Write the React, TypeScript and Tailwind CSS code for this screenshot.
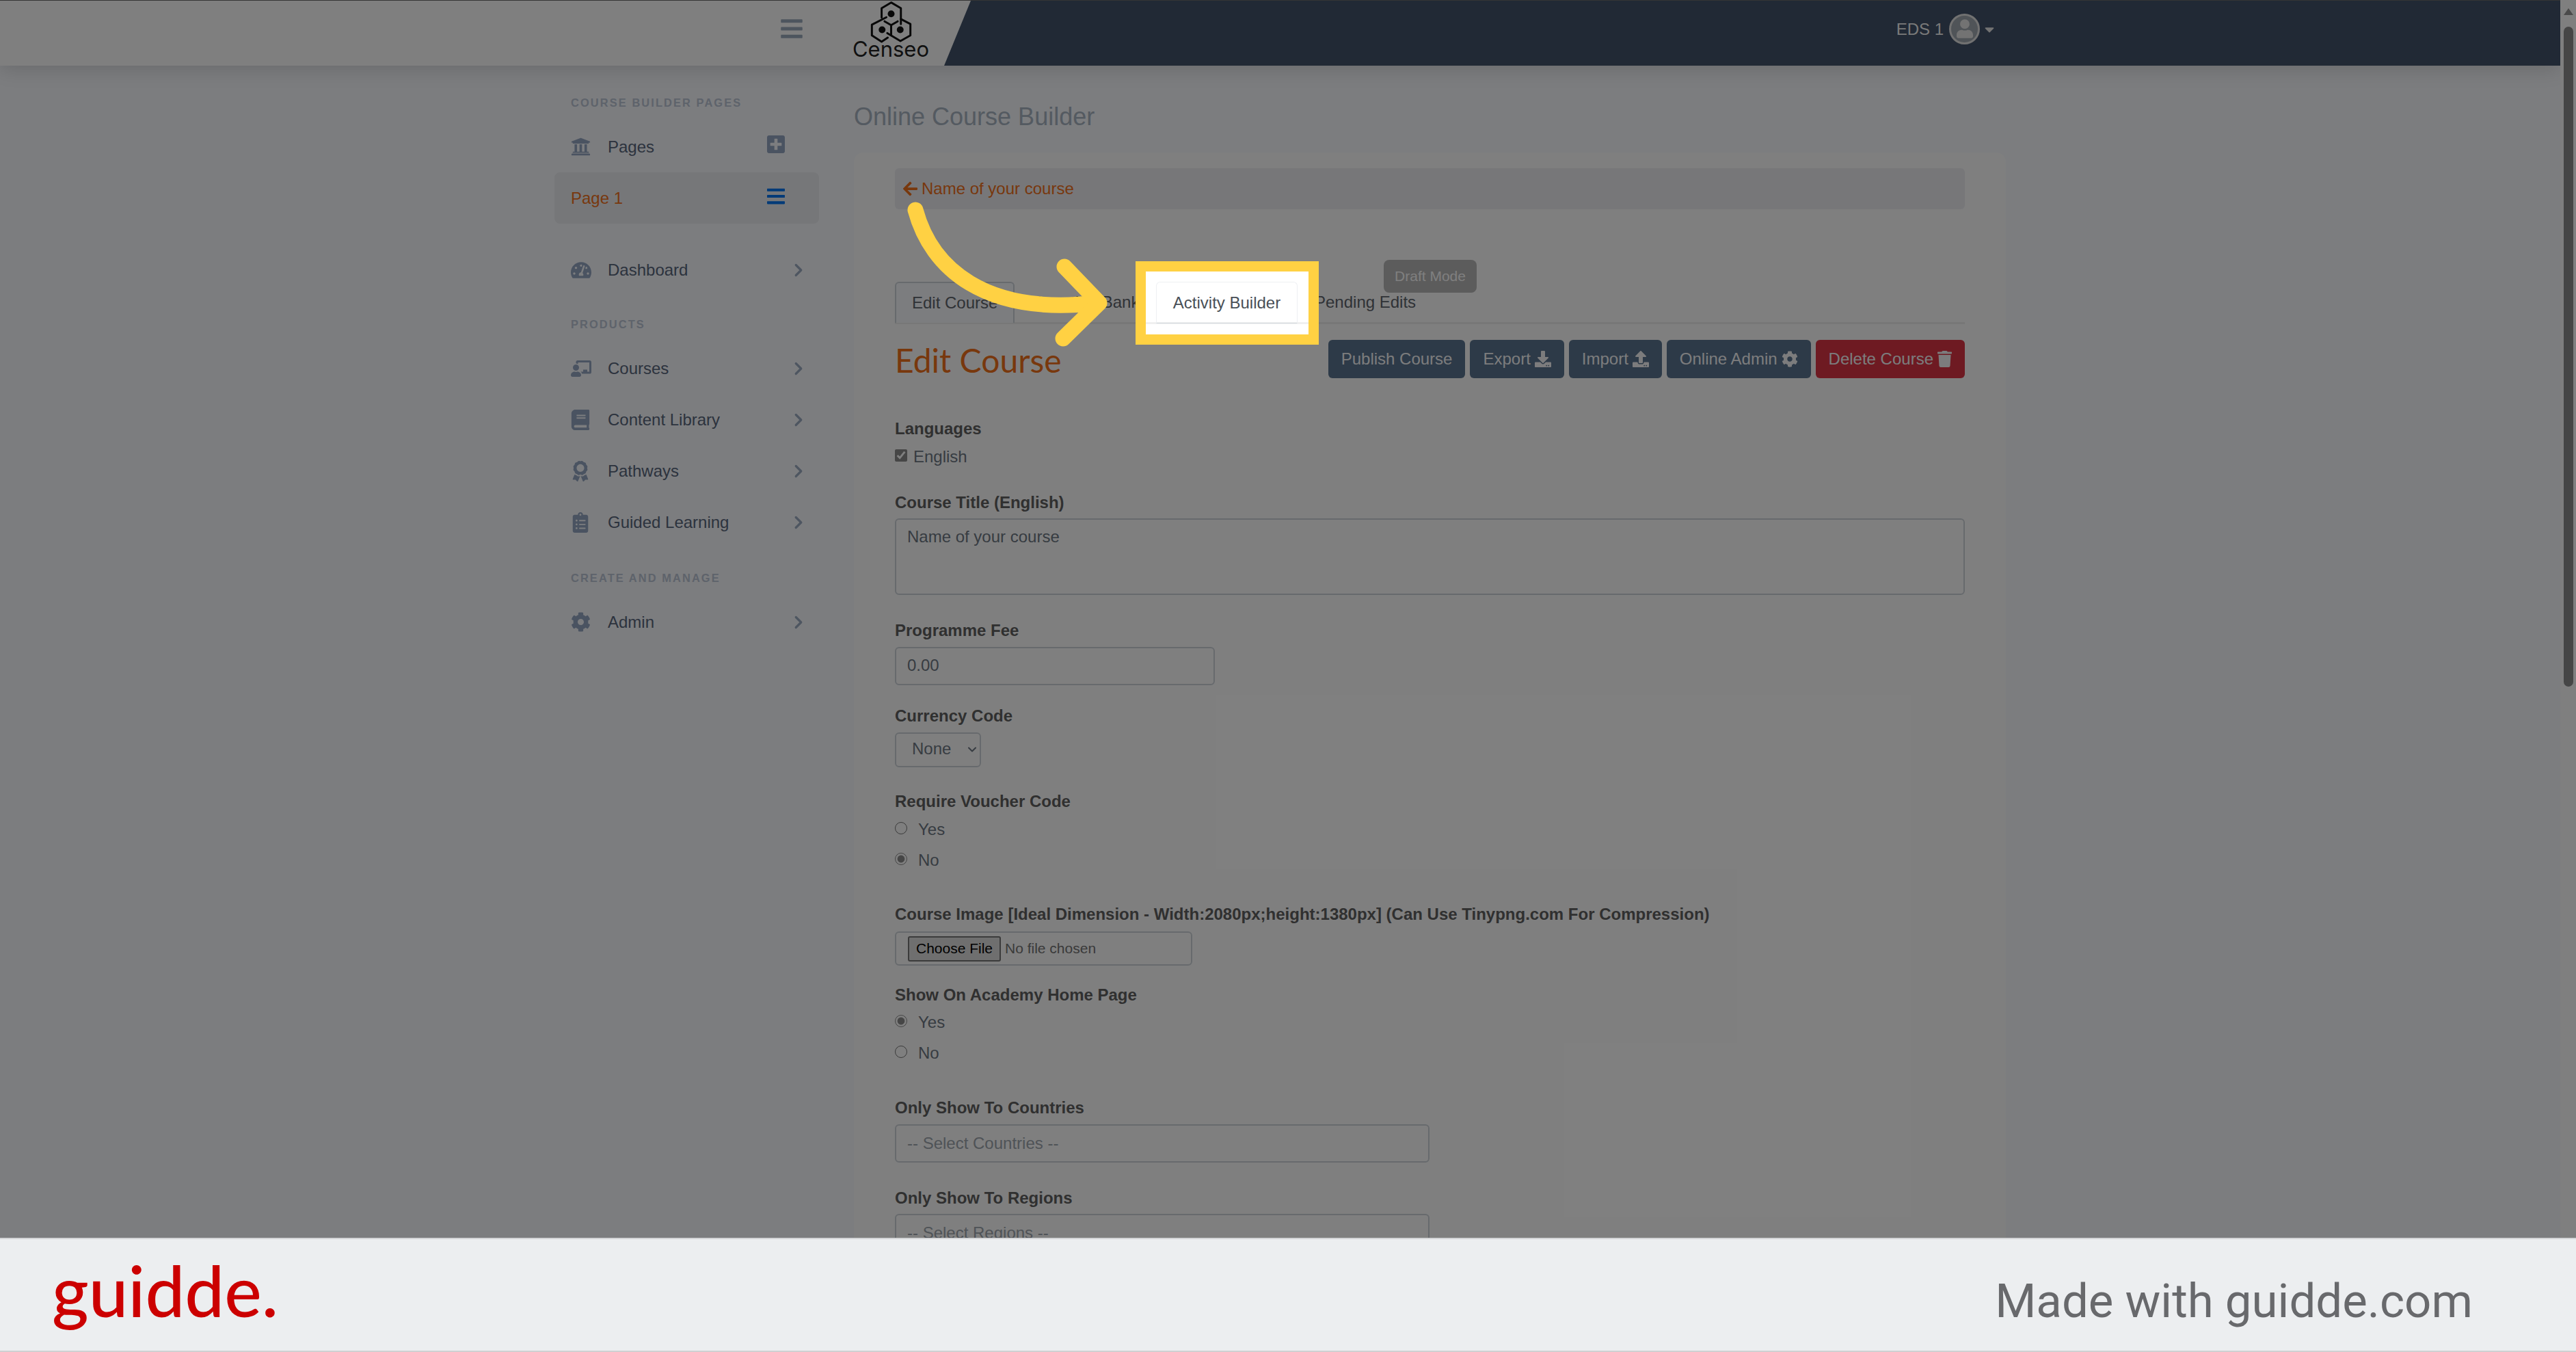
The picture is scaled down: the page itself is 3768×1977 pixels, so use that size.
import type { ReactNode } from "react";
import { ChevronDown, ChevronRight } from "lucide-react";
import {
  FaArrowLeft,
  FaAward,
  FaBars,
  FaBook,
  FaCaretDown,
  FaChalkboardTeacher,
  FaClipboardList,
  FaCog,
  FaDownload,
  FaPlusSquare,
  FaTachometerAlt,
  FaTrash,
  FaUniversity,
  FaUpload,
  FaUser,
} from "react-icons/fa";

function CenseoMark() {
  return (
    <svg viewBox="112 0 190 184" className="w-[63px] h-[61px]" fill="none" stroke="#111" strokeWidth="9" strokeLinejoin="round" strokeLinecap="round">
      <path d="M165 72V30L207 5l43 25v70" />
      <path d="M186 70l-64 33v47l43 28 27-18" />
      <path d="M190 140l58 35 44-25v-50l-42-22" />
      <path d="M178 88l29 17 29-17M207 105v45" />
      <circle cx="207" cy="55" r="15" fill="#111" stroke="none" />
      <circle cx="167" cy="125" r="15" fill="#111" stroke="none" />
      <circle cx="247" cy="125" r="15" fill="#111" stroke="none" />
    </svg>
  );
}

function Header() {
  return (
    <header className="relative h-[96px] flex bg-[#42526a] border-t border-[#6a6a6a] shadow-[0_4px_28px_rgba(0,0,0,0.16)]">
      <div className="w-[1420px] h-full bg-white flex items-center justify-end pr-[61px] [clip-path:polygon(0_0,100%_0,1381px_100%,0_100%)]">
        <FaBars className="text-[#9aaabc] w-[32px] h-[36px] mr-[73px] mb-[14px]" />
        <div className="flex flex-col items-center w-[112px] pb-[9px]">
          <CenseoMark />
          <span className="font-['Inter',sans-serif] text-[31px] leading-[28px] text-[#222] mt-[-5px]">Censeo</span>
        </div>
      </div>
      <div className="flex-1 flex items-center justify-end pr-[826px] pb-[12px]">
        <span className="text-[24px] text-[#f4f4f4]">EDS 1</span>
        <span className="ml-[8px] w-[45px] h-[45px] rounded-full border-[3px] border-[#e2e2e2] bg-[#a0a8b0] flex items-end justify-center overflow-hidden">
          <FaUser className="text-[#e6e6e6] w-[24px] h-[28px] mb-[6px]" />
        </span>
        <FaCaretDown className="ml-[5px] text-[#e6e6e6] w-[18px] h-[22px]" />
      </div>
    </header>
  );
}

function SideLabel({ children, className }: { children: ReactNode; className: string }) {
  return (
    <div className={`h-[24px] pl-[24px] flex items-center text-[16.4px] font-bold tracking-[2.1px] text-[#bcc6d6] whitespace-nowrap ${className}`}>
      {children}
    </div>
  );
}

function SideItem({ icon, label }: { icon: ReactNode; label: string }) {
  return (
    <div className="h-[75px] flex items-center pl-[24px] pr-[15px] text-[24px] text-[#58667c]">
      <span className="w-[54px] flex text-[#94a6c2]">{icon}</span>
      <span className="flex-1">{label}</span>
      <ChevronRight size={30} strokeWidth={2.6} className="text-[#9cacc2]" />
    </div>
  );
}

function Sidebar() {
  return (
    <aside className="w-[438px] shrink-0">
      <SideLabel className="mt-[42px] mb-[15px]">COURSE BUILDER PAGES</SideLabel>
      <div className="h-[75px] w-[387px] flex items-center pl-[24px] pr-[50px] text-[24px] text-[#58667c]">
        <span className="w-[54px] flex text-[#94a6c2]">
          <FaUniversity className="w-[29px] h-[29px]" />
        </span>
        <span className="flex-1">Pages</span>
        <FaPlusSquare className="w-[26px] h-[30px] mb-[8px] text-[#94a6c2]" />
      </div>
      <div className="h-[75px] w-[387px] flex items-center pl-[24px] pr-[50px] rounded-[8px] bg-[#eceef2] text-[24px] text-[#f0701a]">
        <span className="flex-1">Page 1</span>
        <FaBars className="w-[26px] h-[30px] mb-[6px] text-[#0075f0]" />
      </div>
      <div className="w-[387px] mt-[30px]">
        <SideItem icon={<FaTachometerAlt className="w-[30px] h-[30px]" />} label="Dashboard" />
        <SideLabel className="mt-[30px] mb-[15px]">PRODUCTS</SideLabel>
        <SideItem icon={<FaChalkboardTeacher className="w-[30px] h-[30px]" />} label="Courses" />
        <SideItem icon={<FaBook className="w-[28px] h-[30px]" />} label="Content Library" />
        <SideItem icon={<FaAward className="w-[28px] h-[30px]" />} label="Pathways" />
        <SideItem icon={<FaClipboardList className="w-[28px] h-[30px]" />} label="Guided Learning" />
        <SideLabel className="mt-[32px] mb-[15px]">CREATE AND MANAGE</SideLabel>
        <SideItem icon={<FaCog className="w-[29px] h-[29px]" />} label="Admin" />
      </div>
    </aside>
  );
}

function ActionButton({ label, icon, red }: { label: string; icon?: ReactNode; red?: boolean }) {
  return (
    <button className={`h-[56px] px-[19px] rounded-[6px] flex items-center gap-[6px] text-[24px] text-[#f8f9fa] ${red ? "bg-[#dc3545]" : "bg-[#5a7490]"}`}>
      {label}
      {icon}
    </button>
  );
}

function FieldLabel({ children, className }: { children: ReactNode; className: string }) {
  return <div className={`h-[30px] flex items-center text-[24px] font-bold text-[#606060] whitespace-nowrap ${className}`}>{children}</div>;
}

function RadioRow({ label, checked, className }: { label: string; checked?: boolean; className: string }) {
  return (
    <label className={`h-[30px] flex items-center text-[24px] text-[#6e7884] ${className}`}>
      <input type="radio" readOnly checked={!!checked} className="w-[18px] h-[18px] m-0 mb-[5px] accent-[#8c8c8c]" />
      <span className="ml-[16px]">{label}</span>
    </label>
  );
}

function Form() {
  const boxClass = "block border-2 border-[#ced4da] rounded-[6px] bg-transparent text-[24px] text-[#6e7884] px-[16px] outline-none";
  return (
    <form>
      <FieldLabel className="mt-[59px]">Languages</FieldLabel>
      <label className="mt-[11px] h-[30px] flex items-center text-[24px] text-[#6e7884]">
        <input type="checkbox" readOnly checked className="w-[18px] h-[18px] m-0 mb-[4px] accent-[#8c8c8c]" />
        <span className="ml-[9px]">English</span>
      </label>
      <FieldLabel className="mt-[37px]">Course Title (English)</FieldLabel>
      <textarea readOnly defaultValue="Name of your course" className={`${boxClass} mt-[8px] w-full h-[112px] py-[7px] resize-none`} />
      <FieldLabel className="mt-[37px]">Programme Fee</FieldLabel>
      <input readOnly defaultValue="0.00" className={`${boxClass} mt-[9px] w-[468px] h-[56px] pb-[2px]`} />
      <FieldLabel className="mt-[30px]">Currency Code</FieldLabel>
      <div className="relative mt-[9px] w-[126px]">
        <select className={`${boxClass} w-full h-[51px] pl-[23px] pb-[3px] appearance-none`}>
          <option>None</option>
        </select>
        <ChevronDown size={20} strokeWidth={2.5} className="absolute right-[3px] top-[15px] text-[#6e7884]" />
      </div>
      <FieldLabel className="mt-[35px]">Require Voucher Code</FieldLabel>
      <RadioRow label="Yes" className="mt-[11px]" />
      <RadioRow label="No" checked className="mt-[15px]" />
      <FieldLabel className="mt-[49px]">Course Image [Ideal Dimension - Width:2080px;height:1380px] (Can Use Tinypng.com For Compression)</FieldLabel>
      <div className="mt-[10px] w-[435px] h-[50px] border-2 border-[#ced4da] rounded-[6px] flex items-center pl-[17px] text-[21px]">
        <button type="button" className="h-[37px] w-[136px] border-2 border-[#767676] rounded-[3px] bg-[#dfdfdf] text-black">Choose File</button>
        <span className="ml-[6px] text-[#747474]">No file chosen</span>
      </div>
      <FieldLabel className="mt-[28px]">Show On Academy Home Page</FieldLabel>
      <RadioRow label="Yes" checked className="mt-[10px]" />
      <RadioRow label="No" className="mt-[15px]" />
      <FieldLabel className="mt-[50px]">Only Show To Countries</FieldLabel>
      <div className="mt-[9px] w-[782px] h-[56px] border-2 border-[#ced4da] rounded-[6px] flex items-center px-[16px] text-[24px] text-[#9ea6ae]">-- Select Countries --</div>
      <FieldLabel className="mt-[37px]">Only Show To Regions</FieldLabel>
      <div className="mt-[8px] w-[782px] h-[56px] border-2 border-[#ced4da] rounded-[6px] flex items-center px-[16px] text-[24px] text-[#9ea6ae]">-- Select Regions --</div>
    </form>
  );
}

function Main() {
  return (
    <main className="w-[1685px] shrink-0">
      <h1 className="mt-[50px] mb-[27px] h-[50px] flex items-center text-[36px] text-[#a8b4c2]">Online Course Builder</h1>
      <section className="bg-white rounded-[14px] px-[60px] pt-[23px]">
        <div className="h-[60px] rounded-[6px] bg-[#eeeff3] flex items-center pl-[12px] text-[24px] text-[#f0701a]">
          <FaArrowLeft className="w-[21px] h-[24px] mr-[6px]" />
          Name of your course
        </div>
        <div className="relative mt-[106px] h-[62px] flex border-b-[3px] border-[#eeeeee] text-[24px] text-[#5e646c]">
          <div className="w-[175px] h-[60px] pl-[23px] flex items-center border-2 border-b-0 border-[#ced4da] rounded-t-[6px] bg-[#f8fafe]">Edit Course</div>
          <div className="w-[207px] pl-[25px] flex items-center">Question Bank</div>
          <div className="w-[207px]" />
          <div className="pl-[25px] flex items-center">Pending Edits</div>
          <span className="absolute left-[715px] top-[-32px] w-[136px] h-[48px] rounded-[8px] bg-[#b8b8b8] text-white text-[21px] flex items-center justify-center">Draft Mode</span>
        </div>
        <div className="mt-[23px] h-[56px] flex items-center justify-between">
          <h2 className="font-['Lato',sans-serif] text-[48px] text-[#f0701a] pt-[4px]">Edit Course</h2>
          <div className="flex gap-[7px]">
            <ActionButton label="Publish Course" />
            <ActionButton label="Export" icon={<FaDownload className="w-[24px] h-[24px]" />} />
            <ActionButton label="Import" icon={<FaUpload className="w-[24px] h-[24px]" />} />
            <ActionButton label="Online Admin" icon={<FaCog className="w-[24px] h-[24px]" />} />
            <ActionButton label="Delete Course" red icon={<FaTrash className="w-[21px] h-[24px]" />} />
          </div>
        </div>
        <Form />
      </section>
    </main>
  );
}

function Scrollbar() {
  return (
    <div className="w-[23px] shrink-0 bg-white flex flex-col items-center pt-[12px]">
      <span className="w-0 h-0 border-x-[7px] border-x-transparent border-b-[10px] border-b-[#949494]" />
      <span className="w-[14px] h-[965px] mt-[17px] rounded-full bg-[#8c8c8c]" />
    </div>
  );
}

function Highlight() {
  return (
    <div className="absolute left-[1661px] top-[382px] w-[268px] h-[122px] border-[15px] border-[#ffd143] bg-white">
      <div className="absolute left-0 right-0 top-[74px] h-[3px] bg-[#f0f0f0]" />
      <div className="absolute left-[15px] top-[15px] w-[207px] h-[61px] border border-[#eef0f3] border-b-[#d3d9e0] rounded-t-[6px] flex items-center justify-center text-[24px] text-[#495057]">
        Activity Builder
      </div>
    </div>
  );
}

function CurvedArrow() {
  return (
    <svg viewBox="1320 280 310 240" className="absolute left-[1320px] top-[280px] w-[310px] h-[240px]" fill="none" stroke="#ffd143" strokeWidth="23" strokeLinecap="round" strokeLinejoin="round">
      <path d="M1339 307C1362 392 1440 462 1604 443" />
      <path d="M1557 390L1608 443L1555 495" />
    </svg>
  );
}

export default function App() {
  return (
    <div className="relative w-[3768px] h-[1977px] overflow-hidden bg-[#eceef0] font-['Liberation_Sans',Arial,sans-serif]">
      <div className="relative h-[1810px] overflow-hidden flex">
        <div className="w-[3745px] shrink-0 bg-[#f8fafe] overflow-hidden">
          <Header />
          <div className="w-[2123px] mx-auto flex">
            <Sidebar />
            <Main />
          </div>
        </div>
        <Scrollbar />
        <div className="absolute inset-0 bg-black/50" />
        <Highlight />
        <CurvedArrow />
      </div>
      <footer className="h-[167px] border-t-2 border-[#d4d5d7] border-b-2 border-b-[#cfd0d2] flex items-center justify-between pl-[76px] pr-[151px]">
        <span className="font-['Lato',sans-serif] text-[103px] leading-none font-medium text-[#cc0000] pb-[14px]">guidde.</span>
        <span className="font-['Roboto',sans-serif] text-[69px] text-[#68696c] mt-[18px]">Made with guidde.com</span>
      </footer>
    </div>
  );
}
